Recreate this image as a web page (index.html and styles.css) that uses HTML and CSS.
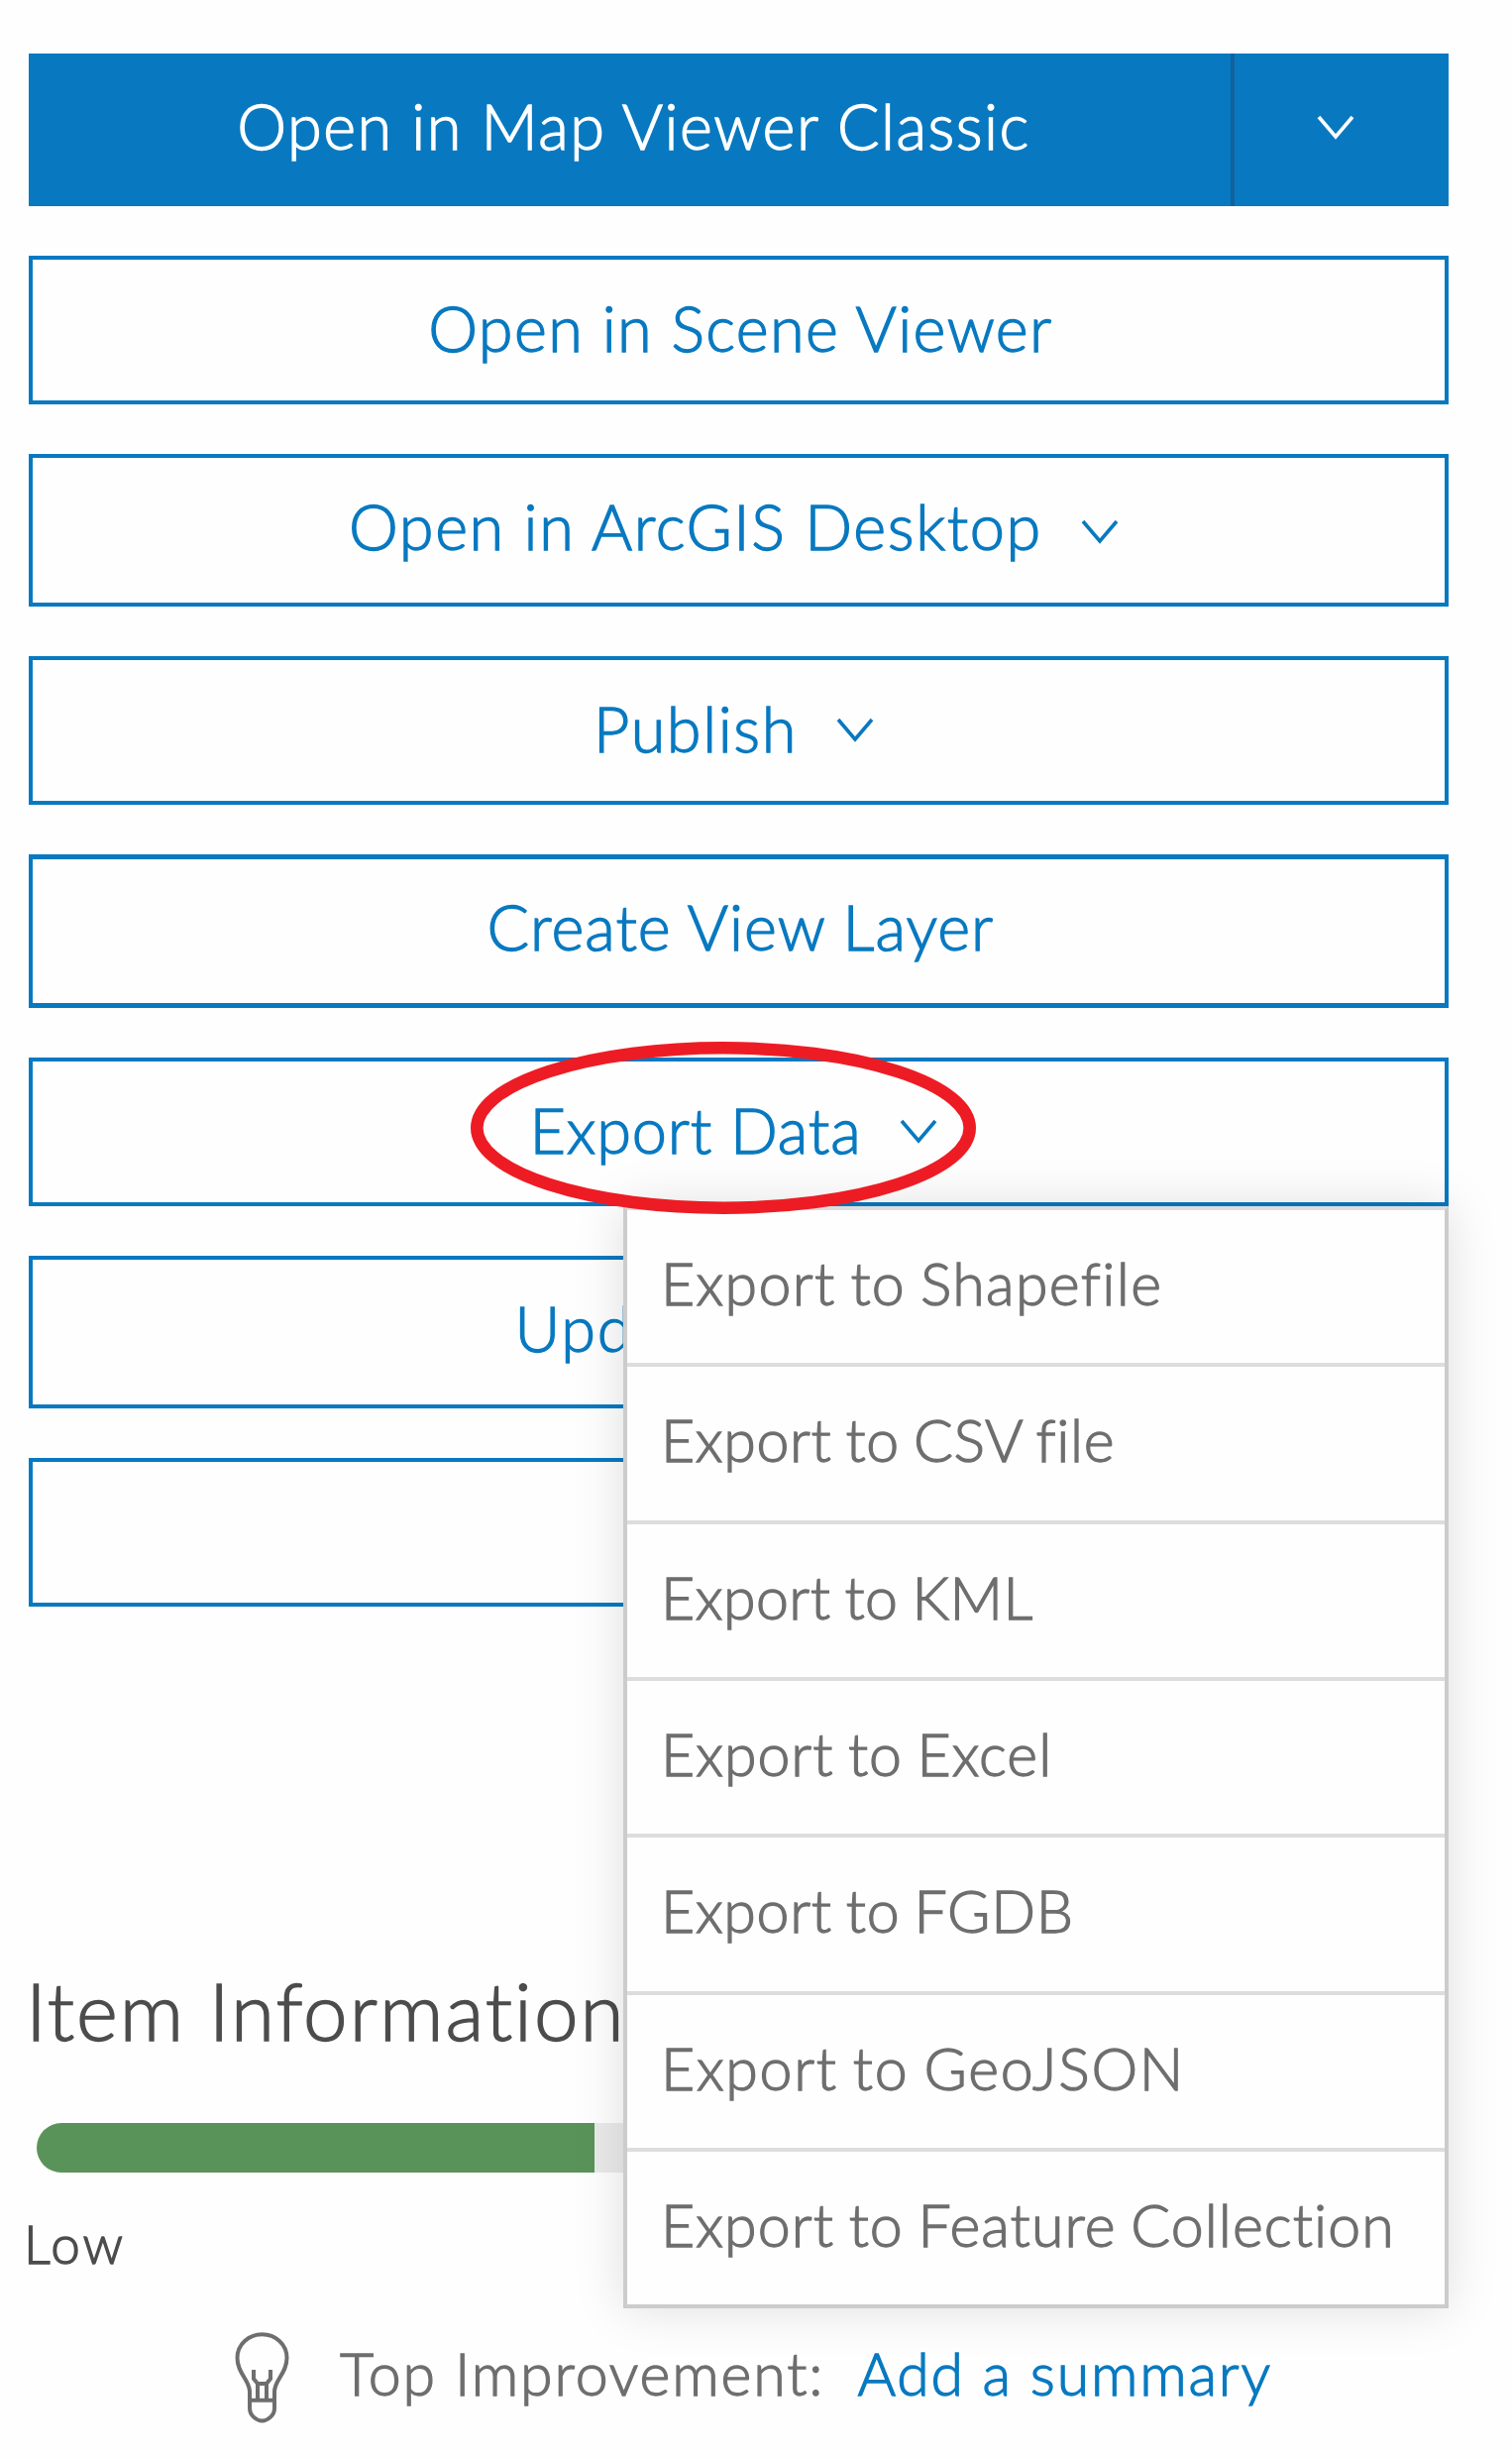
FILE: index.html
```html
<!DOCTYPE html>
<html lang="en">
<head>
<meta charset="utf-8">
<title>Item details</title>
<link rel="stylesheet" href="styles.css">
</head>
<body>
<main class="panel">
  <div class="actions">
    <div class="split">
      <button class="split-main"><span class="t-classic">Open in Map Viewer Classic</span></button>
      <button class="split-toggle" aria-label="More"><svg class="chevron" viewBox="0 0 38 26"><path d="M2 2 L19 22 L36 2"/></svg></button>
    </div>
    <button class="btn short"><span class="t-scene">Open in Scene Viewer</span></button>
    <button class="btn menu-btn"><span class="t-desktop">Open in ArcGIS Desktop</span><svg class="chevron" viewBox="0 0 38 26"><path d="M2 2 L19 22 L36 2"/></svg></button>
    <button class="btn short menu-btn"><span class="t-publish">Publish</span><svg class="chevron" viewBox="0 0 38 26"><path d="M2 2 L19 22 L36 2"/></svg></button>
    <button class="btn tall"><span class="t-view">Create View Layer</span></button>
    <div class="dropdown">
      <button class="btn short menu-btn"><span class="t-export">Export Data</span><svg class="chevron" viewBox="0 0 38 26"><path d="M2 2 L19 22 L36 2"/></svg></button>
      <ul class="menu">
        <li class="m-shape">Export to Shapefile</li>
        <li class="m-csv">Export to CSV file</li>
        <li class="m-kml">Export to KML</li>
        <li class="m-excel">Export to Excel</li>
        <li class="m-fgdb">Export to FGDB</li>
        <li class="m-json">Export to GeoJSON</li>
        <li class="m-feature">Export to Feature Collection</li>
      </ul>
      <svg class="callout" viewBox="0 0 510 174"><ellipse cx="255" cy="87" rx="248.7" ry="80.7"/></svg>
    </div>
    <button class="btn menu-btn"><span class="t-update">Update Data</span><svg class="chevron" viewBox="0 0 38 26"><path d="M2 2 L19 22 L36 2"/></svg></button>
    <button class="btn short"></button>
  </div>
  <h2 class="heading">Item Information</h2>
  <div class="meter"><div class="meter-fill"></div></div>
  <div class="low">Low</div>
  <div class="tip">
    <svg class="bulb" viewBox="0 0 55 92"><path d="M15 60 C15 48 2.5 42 2.5 26 C2.5 12 14 2.3 27.5 2.3 C41 2.3 52.5 12 52.5 26 C52.5 42 40 48 40 60 V77 C40 84 33 89.5 27.5 89.5 C22 89.5 15 84 15 77 Z M15 68.8 H40 M19 38 V47 L23 52 H32 L36 47 V38 M23 52 V68 M32 52 V68"/></svg>
    <span class="tip-label">Top Improvement:</span>
    <a class="tip-link">Add a summary</a>
  </div>
</main>
</body>
</html>
```
FILE: styles.css
```css
* { box-sizing: border-box; }

body {
  margin: 0;
  background: #fefefe;
  font-family: Lato, "Open Sans", sans-serif;
  font-weight: 300;
  overflow: hidden;
}

.panel { width: 1462px; padding: 54px 0 0 29px; }

.actions { display: flex; flex-direction: column; gap: 50px; }

button {
  margin: 0;
  padding: 0;
  border: 0;
  background: none;
  font: inherit;
}

.btn, .split-main {
  display: flex;
  justify-content: center;
  font-size: 63px;
  line-height: 137px;
  white-space: nowrap;
  -webkit-text-stroke: 1.3px currentColor;
}

.btn {
  width: 100%;
  height: 154px;
  padding-left: 4px;
  border: 4px solid #0879c0;
  background: #fefefe;
  color: #0879c0;
}
.btn.short { height: 150px; }
.btn.tall { height: 155px; border-width: 5px 4px; line-height: 135px; }
.menu-btn { gap: 39px; padding-left: 0; padding-right: 10px; }

.split { display: flex; height: 154px; background: #0879c0; color: #fff; }
.split-main { flex: 1; line-height: 145px; padding-left: 8px; color: #fff; }
.split-toggle {
  display: flex;
  justify-content: center;
  width: 220px;
  padding-right: 12px;
  border-left: 4px solid #11629c;
  color: #fff;
}

.chevron {
  flex: none;
  width: 38px;
  height: 26px;
  margin-top: 62px;
  fill: none;
  stroke: currentColor;
  stroke-width: 3.6;
}
.short .chevron { margin-top: 58px; }

.t-classic { letter-spacing: 1.5px; }
.t-scene { letter-spacing: 1.37px; }
.t-desktop { letter-spacing: 1.6px; }
.t-publish { letter-spacing: 1.6px; }
.t-view { letter-spacing: 1px; }
.t-export { letter-spacing: .8px; }
.t-update { letter-spacing: 1.8px; }

.dropdown { position: relative; z-index: 1; }

.menu {
  position: absolute;
  top: 150px;
  right: 0;
  width: 833px;
  margin: 0;
  padding: 0;
  border: 4px solid #ccc;
  border-top-color: #dcdddf;
  background: #fefefe;
  box-shadow: 0 0 48px rgba(0, 0, 0, .13);
  list-style: none;
  color: #6e6e6e;
  font-size: 59px;
  line-height: 148px;
  word-spacing: -2.5px;
  -webkit-text-stroke: 1.3px currentColor;
}
.menu li {
  height: 158.33px;
  padding-left: 34px;
  border-bottom: 4px solid #dcdddf;
  white-space: nowrap;
}
.menu li:last-child { height: 154px; border-bottom: 0; }

.m-shape { letter-spacing: 1.35px; }
.m-csv { letter-spacing: .65px; }
.m-kml { letter-spacing: .5px; }
.m-excel { letter-spacing: 1px; }
.m-fgdb { letter-spacing: .7px; }
.m-json { letter-spacing: 1.7px; }
.m-feature { letter-spacing: 1.1px; }

/* red ring that marks the open menu button */
.callout {
  position: absolute;
  left: 446px;
  top: -16px;
  width: 510px;
  height: 174px;
  fill: none;
  stroke: #ed1c24;
  stroke-width: 12.6;
}

.heading {
  margin: 359px 0 0 -3px;
  font-size: 80px;
  font-weight: 300;
  line-height: 96px;
  letter-spacing: 2px;
  color: #4c4c4c;
  -webkit-text-stroke: 1.4px currentColor;
}

.meter {
  height: 50px;
  margin: 66px 8px 0;
  border-radius: 25px;
  background: #eaeaea;
  overflow: hidden;
}
.meter-fill { width: 563px; height: 50px; background: #5a9359; }

.low {
  margin: 40px 0 0 -5px;
  font-size: 53px;
  line-height: 64px;
  letter-spacing: 3px;
  color: #4c4c4c;
  -webkit-text-stroke: 1.3px currentColor;
}

.tip {
  display: flex;
  margin: 64px 0 0 208px;
  font-size: 59px;
  line-height: 70px;
  white-space: nowrap;
  -webkit-text-stroke: 1.3px currentColor;
}
.bulb {
  flex: none;
  width: 55px;
  height: 92px;
  margin: -7px 51px 0 0;
  fill: none;
  stroke: #6e6e6e;
  stroke-width: 4;
}
.tip-label { letter-spacing: 1.9px; color: #6e6e6e; }
.tip-link { margin-left: 33px; letter-spacing: 1.8px; color: #0879c0; }
```
